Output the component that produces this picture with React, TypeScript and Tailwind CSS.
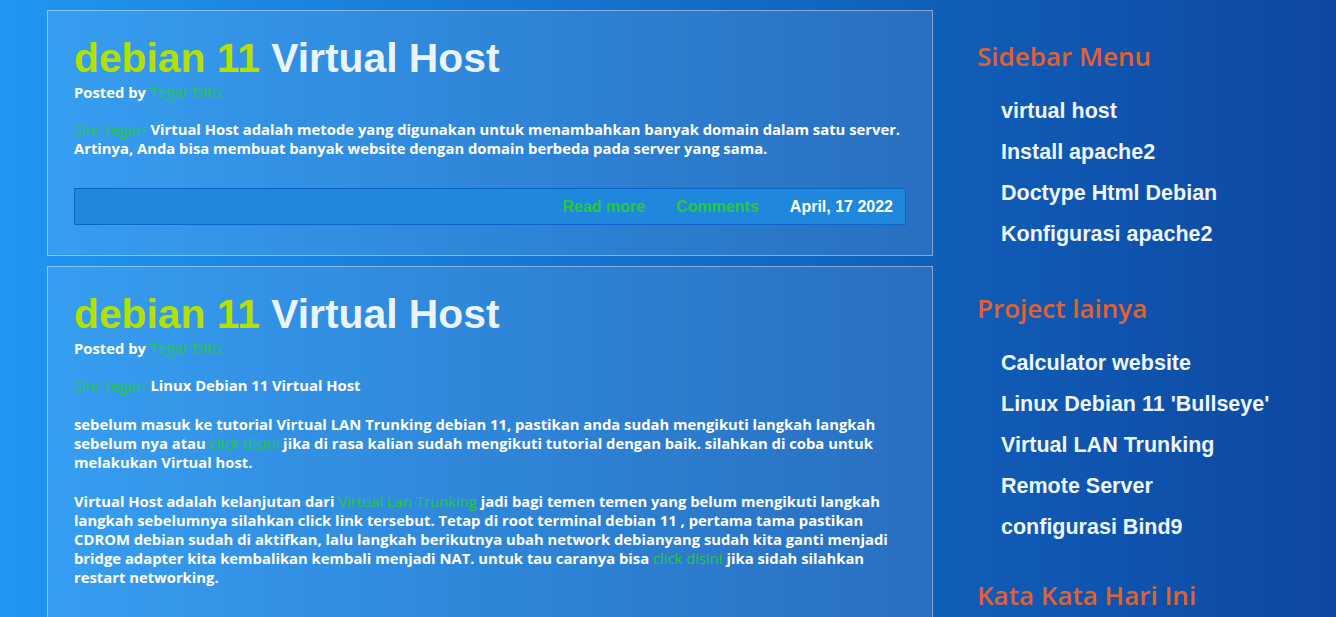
import React from 'react';

const body = { fontFamily: '"Open Sans", "DejaVu Sans", sans-serif' };
const arial = { fontFamily: '"Liberation Sans", Arial, sans-serif' };

const Green: React.FC<{ children: React.ReactNode }> = ({ children }) => (
  <a href="#" className="text-[#27c93f] font-medium">{children}</a>
);

const PostCard: React.FC<{ children: React.ReactNode }> = ({ children }) => (
  <article className="border border-white/40 bg-white/10 px-[26px] pt-[24px] pb-[30px]">
    <h1 className="text-[40.8px] leading-[47px] font-bold" style={arial}>
      <span className="text-[#b4e000]">debian 11</span> <span className="text-[#eaf4ff]">Virtual Host</span>
    </h1>
    <div className="text-[14.8px] leading-[20px] font-bold text-white" style={body}>
      Posted by <Green>Tegar Dito</Green>
    </div>
    <div className="mt-[18px] text-[14.8px] leading-[19px] font-bold text-white" style={body}>
      {children}
    </div>
    <div
      className="mt-[30px] flex h-[37px] items-center justify-end gap-[31px] border border-[#0d65c9] bg-[#1f87dc] pr-[12px] text-[16px] font-bold"
      style={arial}
    >
      <a href="#" className="text-[#27c93f]">Read more</a>
      <a href="#" className="text-[#27c93f]">Comments</a>
      <span className="text-white">April, 17 2022</span>
    </div>
  </article>
);

const Widget: React.FC<{ title: string; items: string[]; className?: string }> = ({ title, items, className }) => (
  <section className={className}>
    <h2 className="text-[26px] leading-[32px] font-semibold text-[#e2622d]" style={body}>{title}</h2>
    {items.length > 0 && (
      <ul className="mt-[19px] pl-[24px]">
        {items.map((it) => (
          <li key={it} className="text-[21.5px] leading-[41px] font-bold text-[#eef6ff]" style={arial}>
            <a href="#">{it}</a>
          </li>
        ))}
      </ul>
    )}
  </section>
);

export default function App() {
  return (
    <div className="min-h-screen h-[617px] overflow-hidden bg-gradient-to-r from-[#2196f3] to-[#0d47a1]">
      <div className="flex pl-[47px] pt-[10px]">
        <main className="flex w-[886px] flex-col gap-[10px]">
          <PostCard>
            <p>
              <Green>Om Tegar-</Green> Virtual Host adalah metode yang digunakan untuk menambahkan banyak domain dalam satu server.
              Artinya, Anda bisa membuat banyak website dengan domain berbeda pada server yang sama.
            </p>
          </PostCard>
          <PostCard>
            <p>
              <Green>Om Tegar-</Green> Linux Debian 11 Virtual Host
            </p>
            <p className="mt-[20px]">
              sebelum masuk ke tutorial Virtual LAN Trunking debian 11, pastikan anda sudah mengikuti langkah langkah sebelum nya atau{' '}
              <Green>click disini</Green> jika di rasa kalian sudah mengikuti tutorial dengan baik. silahkan di coba untuk melakukan Virtual host.
            </p>
            <p className="mt-[20px]">
              Virtual Host adalah kelanjutan dari <Green>Virtual Lan Trunking</Green> jadi bagi temen temen yang belum mengikuti langkah langkah
              sebelumnya silahkan click link tersebut. Tetap di root terminal debian 11 , pertama tama pastikan CDROM debian sudah di aktifkan, lalu
              langkah berikutnya ubah network debianyang sudah kita ganti menjadi bridge adapter kita kembalikan kembali menjadi NAT. untuk tau caranya
              bisa <Green>click disini</Green> jika sidah silahkan restart networking.
            </p>
          </PostCard>
        </main>
        <aside className="flex-1 pl-[44px] pt-[30px]">
          <Widget title="Sidebar Menu" items={['virtual host', 'Install apache2', 'Doctype Html Debian', 'Konfigurasi apache2']} />
          <Widget
            className="mt-[37px]"
            title="Project lainya"
            items={['Calculator website', "Linux Debian 11 'Bullseye'", 'Virtual LAN Trunking', 'Remote Server', 'configurasi Bind9']}
          />
          <Widget className="mt-[31px]" title="Kata Kata Hari Ini" items={[]} />
        </aside>
      </div>
    </div>
  );
}
